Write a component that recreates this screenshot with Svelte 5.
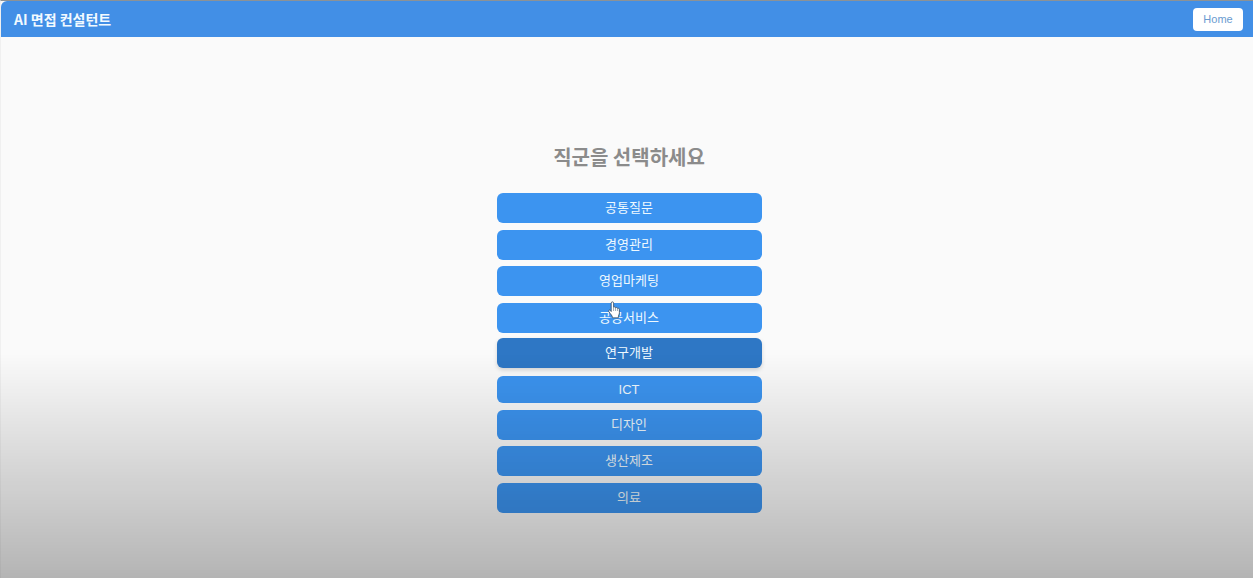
<script>
  const jobs = ['공통질문', '경영관리', '영업마케팅', '공공서비스', '연구개발', 'ICT', '디자인', '생산제조', '의료'];
  let selected = $state('연구개발');
</script>

<div class="page">
  <header>
    <h1>AI 면접 컨설턴트</h1>
    <button class="home" type="button">Home</button>
  </header>
  <main>
    <h2>직군을 선택하세요</h2>
    <div class="jobs">
      {#each jobs as job}
        <button
          type="button"
          class="job"
          class:latin={job === 'ICT'}
          class:active={selected === job}
          onclick={() => (selected = job)}>{job}</button>
      {/each}
    </div>
  </main>
  <div class="shade"></div>
  <svg class="pointer" width="12" height="18" viewBox="0 0 12 18" aria-hidden="true">
    <path
      d="M3.2 10.5V2.1C3.2.4 5.6.4 5.6 2.1V6.3C6.2 5.5 7.5 5.9 7.6 6.8C8.3 6.1 9.5 6.5 9.6 7.4C10.4 6.9 11.4 7.4 11.4 8.5V11.9C11.4 13.3 10.3 14.4 10.3 16.8H4.5C4.5 14.5 2.4 13.2.8 10.6C.1 9.3 1.5 8.4 2.4 9.5Z"
      fill="#fff" stroke="#34485e" stroke-width=".8" stroke-linejoin="round" />
    <path d="M5.6 6.5V10M7.6 7V10M9.6 7.5V10" fill="none" stroke="#53697e" stroke-width=".6" />
  </svg>
</div>

<style>
  :global(body) {
    margin: 0;
    background: #fafafa;
  }
  .page {
    box-sizing: border-box;
    min-height: 100vh;
    border-top: 1px solid #8c9296;
    border-left: 1px solid #f0f0f0;
    font-family: "Liberation Sans", "Noto Sans CJK KR", sans-serif;
  }
  header {
    display: flex;
    align-items: center;
    justify-content: space-between;
    box-sizing: border-box;
    height: 36px;
    padding: 0 10px 0 13px;
    background: #428fe6;
    border-radius: 6px 0 0 0;
  }
  h1 {
    margin: 0;
    color: #f2faff;
    font: 700 14px/20px "Noto Sans CJK KR", sans-serif;
  }
  button {
    border: 0;
    font-family: inherit;
    cursor: pointer;
  }
  .home {
    width: 50px;
    height: 23px;
    padding: 0;
    border-radius: 4px;
    background: #fff;
    color: #6a9bd0;
    font-size: 11px;
  }
  main {
    display: flex;
    flex-direction: column;
    align-items: center;
    padding: 104px 0 32px 4px;
  }
  h2 {
    margin: 0 0 20px;
    color: #8b8b8b;
    font: 700 20px/32px "Noto Sans CJK KR", sans-serif;
  }
  .jobs {
    display: flex;
    flex-direction: column;
    justify-content: space-between;
    width: 265px;
    min-height: 320px;
  }
  .job {
    padding: 6px 12px;
    border-radius: 6px;
    background: #3c94f0;
    color: #eef9ff;
    font-size: 13px;
    line-height: 18px;
  }
  .latin {
    padding: 5px 12px;
    line-height: 17px;
  }
  .active {
    background: #2e77c5;
    box-shadow: 0 2px 4px rgba(0, 0, 0, 0.15);
    transform: translateY(-2px);
  }
  .shade {
    position: fixed;
    inset: 61% 0 0;
    background: linear-gradient(transparent, rgba(0, 0, 0, 0.28));
    pointer-events: none;
  }
  .pointer {
    position: absolute;
    left: 608px;
    top: 301px;
    pointer-events: none;
  }
</style>
